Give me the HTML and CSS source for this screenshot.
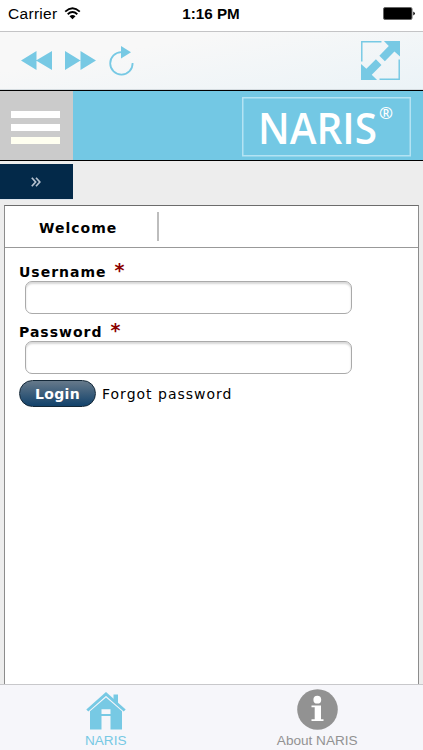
FILE: index.html
```
<!DOCTYPE html>
<html lang="en">
<head>
  <meta charset="UTF-8">
  <meta name="viewport" content="width=device-width, initial-scale=1.0">
  <title>NARIS</title>
  <link rel="stylesheet" href="styles.css">
</head>
<body>
  <div class="statusbar">
    <div class="carrier">
      <span>Carrier</span>
      <svg width="17" height="13" viewBox="0 0 17 13">
        <path d="M1.2 4.6Q8.500-1.900 15.800 4.600M3.700 7.200Q8.500 3 13.300 7.200" fill="none" stroke="#000" stroke-width="1.900"/>
        <path d="M5.500 9.300Q8.500 6.800 11.500 9.300L8.500 12.300Z"/>
      </svg>
    </div>
    <span class="time">1:16 PM</span>
    <svg class="battery" width="33" height="13" viewBox="0 0 33 13">
      <rect x=".5" y=".5" width="28.500" height="12" rx="1.500" fill="#000" stroke="#666"/>
      <path d="M30.300 4.500Q33.500 6.500 30.300 8.500Z"/>
    </svg>
  </div>

  <div class="toolbar">
    <svg class="back" width="31" height="19" viewBox="0 0 31 19">
      <path d="M0 9.500L15.500 0V19ZM15 9.500L31 0V19Z"/>
    </svg>
    <svg class="forward" width="31" height="19" viewBox="0 0 31 19">
      <path d="M0 0L15.500 9.500L0 19ZM15.500 0L31 9.500L15.500 19Z"/>
    </svg>
    <svg class="reload" width="25" height="30" viewBox="0 0 25 30">
      <path d="M12.500 6.200A11.200 11.200 0 1 0 23.600 17" fill="none" stroke="#77c9e4" stroke-width="1.800"/>
      <path d="M12 0L22 6.200L12 12.500Z"/>
    </svg>
    <svg class="expand" width="39" height="39" viewBox="0 0 40 40">
      <path d="M21 .8H.8V21M19 39.200H39.200V19" fill="none" stroke="#77c9e4" stroke-width="1.500"/>
      <path d="M23.500 0H40V16L34.300 10.800L24.500 20.800L18.800 15L28.500 5.200ZM0 40V23.500L5.500 28.500L15.300 18.800L21 24.500L11 34.500L16.500 40Z"/>
    </svg>
  </div>

  <div class="header">
    <div class="menu">
      <span></span>
      <span></span>
      <span class="last"></span>
    </div>
    <svg class="logo" width="169" height="60" viewBox="0 0 169 60">
      <rect x=".75" y=".75" width="167.500" height="58" fill="none" stroke="#b4e3f3" stroke-width="1.500"/>
      <text class="logo-name" x="16" y="46.800" textLength="119" lengthAdjust="spacingAndGlyphs">NARIS</text>
      <text class="logo-mark" x="137" y="22" textLength="14" lengthAdjust="spacingAndGlyphs">®</text>
    </svg>
  </div>

  <div class="expander">
    <svg width="10" height="10" viewBox="0 0 10 10">
      <path d="M.8 .8L4.600 5L.8 9.200M5 .8L8.800 5L5 9.200" fill="none" stroke="#b5c1cf" stroke-width="1.700"/>
    </svg>
  </div>

  <div class="panel">
    <div class="tabs">
      <div class="tab">Welcome</div>
    </div>
    <form class="login-form">
      <label for="username">Username<span class="required">*</span></label>
      <input type="text" id="username">
      <label for="password" class="password-label">Password<span class="required">*</span></label>
      <input type="password" id="password">
      <div class="actions">
        <button type="button" class="login">Login</button>
        <a class="forgot">Forgot password</a>
      </div>
    </form>
  </div>

  <div class="tabbar">
    <div class="tabbar-item active">
      <svg width="40" height="38" viewBox="0 0 40 38">
        <path d="M1.300 18.500L20 2L38.700 18.500" fill="none" stroke="#77c9e4" stroke-width="3"/>
        <path d="M27.500 2.500H32V13L27.500 9Z"/>
        <path fill-rule="evenodd" d="M4 19.300L20 5.500L36 19.300V37.500H24.500V24H15.500V37.500H4ZM15.500 17.200V22H24.500V17.200Z"/>
      </svg>
      <span>NARIS</span>
    </div>
    <div class="tabbar-item">
      <svg width="41" height="41" viewBox="0 0 41 41">
        <circle cx="20.500" cy="20.500" r="20.300" fill="#929292"/>
        <circle cx="20.300" cy="10.700" r="3.900" fill="#fff"/>
        <path d="M14.500 16.500H24V30.200H26.500V32H14.500V30.200H17.700V18.300H14.500Z" fill="#fff"/>
      </svg>
      <span>About NARIS</span>
    </div>
  </div>
</body>
</html>
```
FILE: styles.css
```
* {
  box-sizing: border-box;
}

body {
  margin: 0;
  height: 750px;
  display: flex;
  flex-direction: column;
  overflow: hidden;
  background-color: #ededed;
  font-family: "DejaVu Sans", Verdana, sans-serif;
  color: #000;
}

svg {
  display: block;
  flex: none;
}

.statusbar {
  height: 32px;
  flex: none;
  display: grid;
  grid-template-columns: 1fr auto 1fr;
  align-items: center;
  padding: 0 7px 4px 8px;
  background-color: #fff;
  border-bottom: 1px solid #c4c4c6;
  font-family: "Liberation Sans", Arial, sans-serif;
  font-size: 15.500px;
}

.carrier {
  display: flex;
  align-items: center;
  gap: 7px;
  letter-spacing: 0.300px;
}

.time {
  margin-right: 2px;
  font-weight: bold;
  font-size: 15.200px;
}

.battery {
  justify-self: end;
}

.toolbar {
  height: 58px;
  flex: none;
  display: flex;
  align-items: center;
  padding: 0 23px 0 21px;
  background: linear-gradient(170deg, #f8f8f8 30%, #ebf3f7);
  border-bottom: 1px solid #d5dce0;
  fill: #77c9e4;
}

.forward {
  margin-left: 13px;
}

.reload {
  margin-left: 13px;
}

.expand {
  margin-left: auto;
}

.header {
  height: 71px;
  flex: none;
  display: flex;
  justify-content: space-between;
  background-color: #73c8e4;
  border-top: 1px solid #000;
  border-bottom: 1px solid #000;
}

.menu {
  width: 73px;
  padding: 20px 13px 0 11px;
  background-color: #cbcbcb;
}

.menu span {
  display: block;
  height: 7px;
  margin-bottom: 6px;
  background-color: #fff;
}

.menu .last {
  background-color: #fffff0;
}

.logo {
  margin: 6px 12px 0 0;
  fill: #fff;
  font-family: "Open Sans", sans-serif;
}

.logo-name {
  font-size: 43px;
  font-weight: 600;
}

.logo-mark {
  font-size: 17px;
  font-weight: 600;
}

.expander {
  width: 73px;
  height: 36px;
  flex: none;
  margin: 3px 0 5px;
  padding-right: 2px;
  display: flex;
  align-items: center;
  justify-content: center;
  background-color: #032949;
  border-bottom: 1px solid #dce4ec;
}

.panel {
  flex: 1;
  margin: 0 4px;
  background-color: #fff;
  border: 1px solid #8c8c8c;
  border-top-color: #6c6c6c;
  border-bottom: none;
}

.tabs {
  height: 42px;
  display: flex;
  align-items: center;
  border-bottom: 1px solid #999;
}

.tab {
  width: 154px;
  height: 29px;
  padding-left: 34px;
  border-right: 2px solid #bdbdbd;
  font-size: 14px;
  font-weight: bold;
  letter-spacing: 1px;
  line-height: 33px;
}

.login-form {
  display: flex;
  flex-direction: column;
  align-items: flex-start;
  padding: 13px 14px 0;
}

.login-form label {
  height: 20px;
  font-size: 14px;
  font-weight: bold;
  line-height: 22px;
  letter-spacing: 1px;
  white-space: nowrap;
}

.login-form .password-label {
  margin-top: 7px;
}

.required {
  margin-left: 8px;
  color: #8b0000;
  font-size: 19px;
  line-height: 1;
}

.login-form input {
  width: 327px;
  height: 33px;
  margin: 0 0 0 6px;
  border: 1px solid #aaa;
  border-radius: 7px;
  background-color: #fff;
  box-shadow: inset 0 2px 2px #d8d8d8;
  outline: none;
}

.actions {
  display: flex;
  align-items: center;
  margin-top: 6px;
}

.login {
  width: 77px;
  height: 27px;
  padding: 0;
  border: 1.500px solid #142838;
  border-radius: 14px;
  background: linear-gradient(#66798a, #12426b);
  color: #fff;
  font-family: inherit;
  font-size: 14px;
  font-weight: bold;
  letter-spacing: 0.300px;
}

.forgot {
  margin-left: 6px;
  font-size: 14px;
  letter-spacing: 1px;
}

.tabbar {
  height: 66px;
  flex: none;
  display: grid;
  grid-template-columns: 1fr 1fr;
  padding-bottom: 2px;
  background-color: #f6f6fa;
  border-top: 1px solid #c8c8cb;
  color: #929292;
  font-family: "Liberation Sans", Arial, sans-serif;
  font-size: 13.600px;
}

.tabbar-item {
  display: flex;
  flex-direction: column;
  align-items: center;
  justify-content: flex-end;
  gap: 3px;
}

.active {
  color: #77c9e4;
  fill: #77c9e4;
}
```
